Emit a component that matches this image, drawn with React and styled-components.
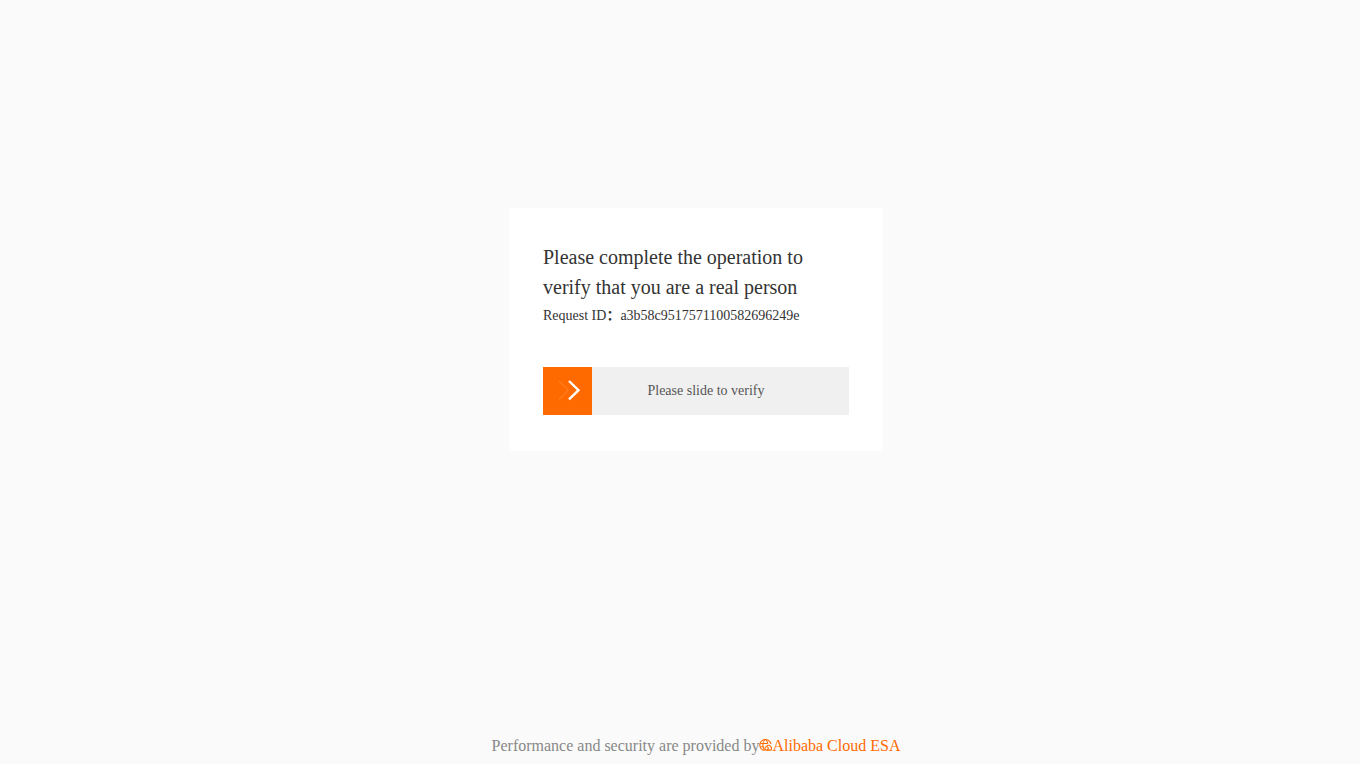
import React, { useState } from "react";
import styled, { createGlobalStyle } from "styled-components";

function App() {
  const [value, setValue] = useState(0);
  return (
    <Page>
      <GlobalStyle />
      <Main>
        <Card>
          <Title>Please complete the operation to verify that you are a real person</Title>
          <RequestId>
            Request ID<b>：</b>a3b58c9517571100582696249e
          </RequestId>
          <Track>
            <Hint htmlFor="verify">Please slide to verify</Hint>
            <Range
              id="verify"
              type="range"
              min="0"
              max="100"
              value={value}
              onChange={(e) => setValue(Number(e.target.value))}
            />
            <Handle style={{ left: `calc((100% - 49px) * ${value / 100})` }}>
              <ArrowIcon />
            </Handle>
          </Track>
        </Card>
      </Main>
      <Footer>
        Performance and security are provided by
        <FooterLink href="#">
          <EsaIcon />
          Alibaba Cloud ESA
        </FooterLink>
      </Footer>
    </Page>
  );
}

function ArrowIcon() {
  return (
    <svg width="49" height="48" viewBox="0 0 49 48" fill="none" aria-hidden="true">
      <path d="M16 14l9.5 9.2-9.5 9.2" stroke="#ff8a35" strokeWidth="1" />
      <path d="M26 14l9.5 9.2-9.5 9.2" stroke="#fff" strokeWidth="2.4" />
    </svg>
  );
}

function EsaIcon() {
  return (
    <svg width="13" height="14" viewBox="0 0 13 14" fill="none" stroke="currentColor" aria-hidden="true">
      <path d="M11.9 5A5.6 5.4 0 1 0 5.6 11.4" strokeWidth="1.2" />
      <path d="M5.6 1C4.4 2.600 3.900 4.300 3.900 6.200s.6 3.700 1.700 5.200M7 1c1 1 1.600 2.100 1.900 3.400" strokeWidth="1" />
      <path d="M1.400 4.500h7.400M1.400 7.800h3.400" strokeWidth="1" />
      <circle cx="7.600" cy="9.400" r="1.700" strokeWidth="1.100" />
      <path d="M7.600 7.500a2.300 2.300 0 0 1 4.200.4 1.700 1.700 0 0 1-.4 3.200H7.600" strokeWidth="1.100" />
    </svg>
  );
}

export default App;

const GlobalStyle = createGlobalStyle`
  body {
    margin: 0;
    background: #fafafa;
    font-family: "Liberation Serif", "Noto Sans CJK SC", serif;
  }
`;

const Page = styled.div`
  display: flex;
  flex-direction: column;
  min-height: 100vh;
  padding-left: 32px;
  box-sizing: border-box;
`;

const Main = styled.main`
  display: flex;
  flex: 1;
  align-items: center;
  justify-content: center;
  padding-bottom: 77px;
`;

const Card = styled.section`
  width: 100%;
  max-width: 374px;
  padding: 34px 34px 36px;
  box-sizing: border-box;
  background: #fff;
`;

const Title = styled.h1`
  margin: 0;
  color: #333;
  font-size: 20px;
  font-weight: 400;
  line-height: 30px;
`;

const RequestId = styled.p`
  margin: 0 0 37px;
  color: #333;
  font-size: 14px;
  line-height: 28px;
`;

const Track = styled.div`
  position: relative;
  display: flex;
  height: 48px;
  background: #f0f0f0;
`;

const Hint = styled.label`
  flex: 1;
  padding-left: 20px;
  color: #555;
  font-size: 14px;
  line-height: 48px;
  text-align: center;
`;

const Range = styled.input`
  position: absolute;
  inset: 0;
  width: 100%;
  height: 100%;
  margin: 0;
  opacity: 0;
  cursor: pointer;
`;

const Handle = styled.span`
  position: absolute;
  top: 0;
  display: flex;
  width: 49px;
  height: 48px;
  background: #ff6a00;
  pointer-events: none;
`;

const Footer = styled.footer`
  display: flex;
  align-items: center;
  justify-content: center;
  padding-bottom: 8px;
  color: #888;
  font-size: 16px;
  line-height: 20px;
`;

const FooterLink = styled.a`
  display: flex;
  align-items: center;
  color: #ff6a00;
  text-decoration: none;
`;
